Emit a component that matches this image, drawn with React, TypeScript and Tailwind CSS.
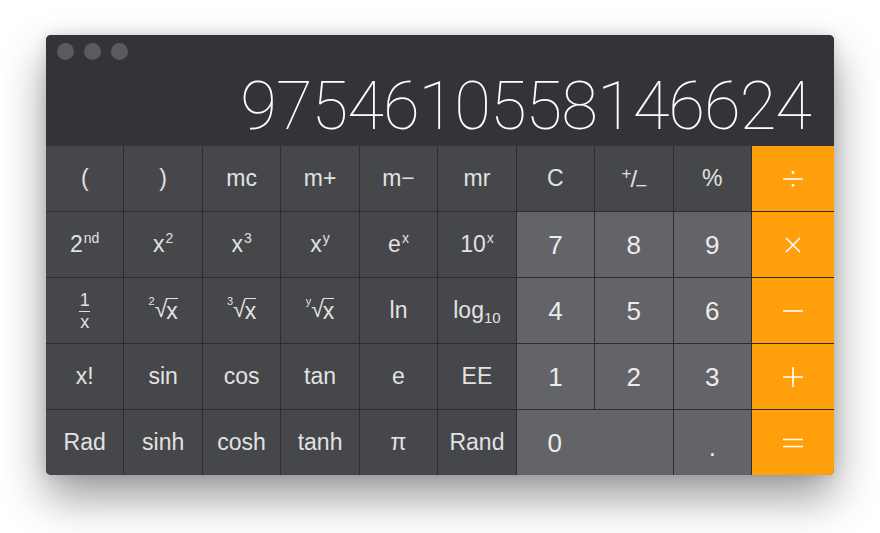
import type { ReactNode } from "react";

type Tone = "fn" | "num" | "op";

const TONE: Record<Tone, string> = {
  fn: "bg-[#46474a] text-[#e2e2e2] text-[23px]",
  num: "bg-[#636467] text-[#ececec] text-[26px]",
  op: "bg-[#fe9f0b] text-white",
};

function Sup({ children }: { children: ReactNode }) {
  return <span className="relative -top-[9px] ml-[1px] text-[14px]">{children}</span>;
}

function Root({ index }: { index: string }) {
  return (
    <span className="inline-flex items-start">
      <span className="relative -top-[2px] text-[11px] leading-none">{index}</span>
      <span className="leading-none">√</span>
      <span className="-ml-[1px] border-t-[1.5px] border-[#e2e2e2] pt-[1px] leading-none">x</span>
    </span>
  );
}

function OpIcon({ kind }: { kind: "div" | "mul" | "sub" | "add" | "eq" }) {
  return (
    <svg width="24" height="24" viewBox="0 0 24 24" fill="none" stroke="white" strokeWidth="1.6">
      {kind === "div" && (
        <>
          <line x1="2" y1="12" x2="22" y2="12" />
          <circle cx="12" cy="5.5" r="1.4" fill="white" stroke="none" />
          <circle cx="12" cy="18.5" r="1.4" fill="white" stroke="none" />
        </>
      )}
      {kind === "mul" && (
        <>
          <line x1="5" y1="5" x2="19" y2="19" />
          <line x1="19" y1="5" x2="5" y2="19" />
        </>
      )}
      {kind === "sub" && <line x1="2" y1="12" x2="22" y2="12" />}
      {kind === "add" && (
        <>
          <line x1="2" y1="12" x2="22" y2="12" />
          <line x1="12" y1="2" x2="12" y2="22" />
        </>
      )}
      {kind === "eq" && (
        <>
          <line x1="2" y1="8.5" x2="22" y2="8.5" />
          <line x1="2" y1="15.5" x2="22" y2="15.5" />
        </>
      )}
    </svg>
  );
}

function Key({
  tone,
  children,
  className = "",
}: {
  tone: Tone;
  children: ReactNode;
  className?: string;
}) {
  return (
    <div
      className={`flex items-center justify-center leading-none ${TONE[tone]} ${className}`}
    >
      {children}
    </div>
  );
}

export default function App() {
  const rows: { tone: Tone; label: ReactNode }[][] = [
    [
      { tone: "fn", label: "(" },
      { tone: "fn", label: ")" },
      { tone: "fn", label: "mc" },
      { tone: "fn", label: "m+" },
      { tone: "fn", label: "m−" },
      { tone: "fn", label: "mr" },
      { tone: "fn", label: "C" },
      {
        tone: "fn",
        label: (
          <span className="inline-flex items-center text-[24px]">
            <span className="relative -top-[5px] text-[17px]">+</span>
            <span className="-mx-[1px]">/</span>
            <span className="relative top-[5px] text-[18px]">–</span>
          </span>
        ),
      },
      { tone: "fn", label: "%" },
      { tone: "op", label: <OpIcon kind="div" /> },
    ],
    [
      { tone: "fn", label: <span>2<Sup>nd</Sup></span> },
      { tone: "fn", label: <span>x<Sup>2</Sup></span> },
      { tone: "fn", label: <span>x<Sup>3</Sup></span> },
      { tone: "fn", label: <span>x<Sup>y</Sup></span> },
      { tone: "fn", label: <span>e<Sup>x</Sup></span> },
      { tone: "fn", label: <span>10<Sup>x</Sup></span> },
      { tone: "num", label: "7" },
      { tone: "num", label: "8" },
      { tone: "num", label: "9" },
      { tone: "op", label: <OpIcon kind="mul" /> },
    ],
    [
      {
        tone: "fn",
        label: (
          <span className="inline-flex flex-col items-center text-[18px] leading-none">
            <span className="pb-[2px]">1</span>
            <span className="border-t-[1.5px] border-[#e2e2e2] px-[1px] pt-[1px]">x</span>
          </span>
        ),
      },
      { tone: "fn", label: <Root index="2" /> },
      { tone: "fn", label: <Root index="3" /> },
      { tone: "fn", label: <Root index="y" /> },
      { tone: "fn", label: "ln" },
      {
        tone: "fn",
        label: (
          <span>
            log<span className="relative top-[5px] text-[15px]">10</span>
          </span>
        ),
      },
      { tone: "num", label: "4" },
      { tone: "num", label: "5" },
      { tone: "num", label: "6" },
      { tone: "op", label: <OpIcon kind="sub" /> },
    ],
    [
      { tone: "fn", label: "x!" },
      { tone: "fn", label: "sin" },
      { tone: "fn", label: "cos" },
      { tone: "fn", label: "tan" },
      { tone: "fn", label: "e" },
      { tone: "fn", label: "EE" },
      { tone: "num", label: "1" },
      { tone: "num", label: "2" },
      { tone: "num", label: "3" },
      { tone: "op", label: <OpIcon kind="add" /> },
    ],
  ];

  const lastRow: { tone: Tone; label: ReactNode }[] = [
    { tone: "fn", label: "Rad" },
    { tone: "fn", label: "sinh" },
    { tone: "fn", label: "cosh" },
    { tone: "fn", label: "tanh" },
    { tone: "fn", label: "π" },
    { tone: "fn", label: "Rand" },
  ];

  return (
    <div
      className="h-[533px] w-[880px] bg-white pl-[46px] pt-[35px]"
      style={{ fontFamily: '"Liberation Sans", Arial, sans-serif' }}
    >
      <div className="flex h-[440px] w-[788px] flex-col overflow-hidden rounded-[5px] bg-[#2c2d30] shadow-[0_22px_45px_rgba(0,0,0,0.4),0_0_14px_rgba(0,0,0,0.12)]">
        <div className="flex h-[111px] flex-col bg-[#333438]">
          <div className="flex gap-[10px] pl-[11px] pt-[8px]">
            <span className="h-[17px] w-[17px] rounded-full bg-[#5a5b5e]" />
            <span className="h-[17px] w-[17px] rounded-full bg-[#5a5b5e]" />
            <span className="h-[17px] w-[17px] rounded-full bg-[#5a5b5e]" />
          </div>
          <div
            className="mt-[13px] pr-[23px] text-right text-[67px] font-thin leading-none tracking-[-1px] text-white"
            style={{ fontFamily: "Roboto, Inter, sans-serif" }}
          >
            9754610558146624
          </div>
        </div>

        <div className="grid flex-1 grid-cols-[repeat(9,minmax(0,1fr))_82px] grid-rows-5 gap-px">
          {rows.flat().map((k, i) => (
            <Key key={i} tone={k.tone}>
              {k.label}
            </Key>
          ))}
          {lastRow.map((k, i) => (
            <Key key={`l${i}`} tone={k.tone}>
              {k.label}
            </Key>
          ))}
          <div className="col-span-2 grid grid-cols-2 bg-[#636467] text-[26px] leading-none text-[#ececec]">
            <span className="flex items-center justify-center pr-[2px]">0</span>
          </div>
          <Key tone="num">
            <span className="relative top-[4px]">.</span>
          </Key>
          <Key tone="op">
            <OpIcon kind="eq" />
          </Key>
        </div>
      </div>
    </div>
  );
}
